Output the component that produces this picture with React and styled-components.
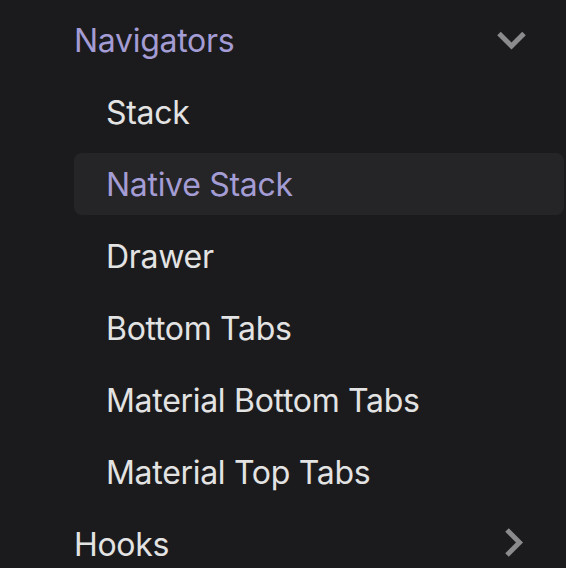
import React from 'react';
import styled, { createGlobalStyle } from 'styled-components';

const GlobalStyle = createGlobalStyle`
  html, body {
    margin: 0;
    padding: 0;
    background: #1b1b1d;
  }
  body {
    font-family: Inter, "Noto Sans", "Liberation Sans", sans-serif;
    -webkit-font-smoothing: antialiased;
  }
`;

const Sidebar = styled.nav`
  width: 566px;
  height: 568px;
  overflow: hidden;
  box-sizing: border-box;
  padding: 9px 2px 0 74px;
`;

const List = styled.ul`
  list-style: none;
  margin: 0;
  padding: 0;
  display: flex;
  flex-direction: column;
  gap: 10px;
`;

const Row = styled.li`
  display: flex;
  align-items: center;
  justify-content: space-between;
  height: 62px;
  box-sizing: border-box;
  padding-left: ${(p) => (p.$nested ? '32px' : '0')};
  padding-right: 28px;
  border-radius: 8px;
  background: ${(p) => (p.$active ? '#252527' : 'transparent')};
  color: ${(p) => (p.$accent ? '#a49cd4' : '#e3e3e3')};
  font-size: 32px;
  font-weight: 400;
  letter-spacing: -0.3px;
  white-space: nowrap;
`;

const Chevron = styled.svg`
  width: 40px;
  height: 40px;
  flex-shrink: 0;
  color: #8b8b8d;
`;

const down = 'M3 13.5L15.5 26L28 13.5';
const right = 'M11 6L23.5 18.5L11 31';

function Caret({ dir }) {
  return (
    <Chevron viewBox="0 0 40 40">
      <path
        d={dir === 'down' ? down : right}
        fill="none"
        stroke="currentColor"
        strokeWidth="5"
      />
    </Chevron>
  );
}

const items = [
  'Stack',
  'Native Stack',
  'Drawer',
  'Bottom Tabs',
  'Material Bottom Tabs',
  'Material Top Tabs',
];

export default function App() {
  return (
    <>
      <GlobalStyle />
      <Sidebar>
        <List>
          <Row $accent>
            Navigators
            <Caret dir="down" />
          </Row>
          {items.map((name) => (
            <Row
              key={name}
              $nested
              $active={name === 'Native Stack'}
              $accent={name === 'Native Stack'}
            >
              {name}
            </Row>
          ))}
          <Row>
            Hooks
            <Caret dir="right" />
          </Row>
        </List>
      </Sidebar>
    </>
  );
}
